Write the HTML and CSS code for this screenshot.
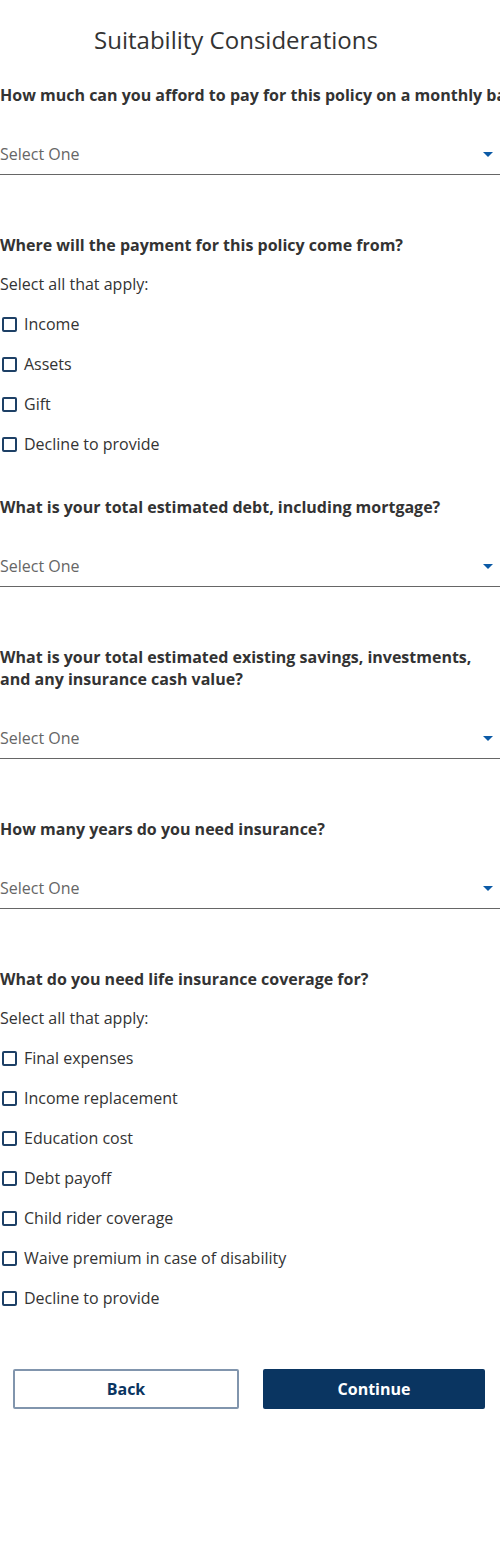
FILE: index.html
```html
<!DOCTYPE html>
<html lang="en">
<head>
<meta charset="utf-8">
<title>Suitability Considerations</title>
<link rel="stylesheet" href="styles.css">
</head>
<body>
<main class="page">
  <h1 class="title">Suitability Considerations</h1>

  <section class="question first">
    <h2 class="q-label nowrap">How much can you afford to pay for this policy on a monthly basis?</h2>
    <div class="select"><span class="placeholder">Select One</span><span class="arrow"></span></div>
  </section>

  <section class="question">
    <h2 class="q-label">Where will the payment for this policy come from?</h2>
    <div class="options">
      <div class="hint">Select all that apply:</div>
      <label class="option"><span class="box"></span>Income</label>
      <label class="option"><span class="box"></span>Assets</label>
      <label class="option"><span class="box"></span>Gift</label>
      <label class="option"><span class="box"></span>Decline to provide</label>
    </div>
  </section>

  <section class="question after-options">
    <h2 class="q-label">What is your total estimated debt, including mortgage?</h2>
    <div class="select"><span class="placeholder">Select One</span><span class="arrow"></span></div>
  </section>

  <section class="question">
    <h2 class="q-label">What is your total estimated existing savings, investments, and any insurance cash value?</h2>
    <div class="select"><span class="placeholder">Select One</span><span class="arrow"></span></div>
  </section>

  <section class="question">
    <h2 class="q-label">How many years do you need insurance?</h2>
    <div class="select"><span class="placeholder">Select One</span><span class="arrow"></span></div>
  </section>

  <section class="question">
    <h2 class="q-label">What do you need life insurance coverage for?</h2>
    <div class="options">
      <div class="hint">Select all that apply:</div>
      <label class="option"><span class="box"></span>Final expenses</label>
      <label class="option"><span class="box"></span>Income replacement</label>
      <label class="option"><span class="box"></span>Education cost</label>
      <label class="option"><span class="box"></span>Debt payoff</label>
      <label class="option"><span class="box"></span>Child rider coverage</label>
      <label class="option"><span class="box"></span>Waive premium in case of disability</label>
      <label class="option"><span class="box"></span>Decline to provide</label>
    </div>
  </section>

  <div class="actions">
    <button class="btn btn-back" type="button">Back</button>
    <button class="btn btn-continue" type="button">Continue</button>
  </div>
</main>
</body>
</html>
```

FILE: styles.css
```css
* { box-sizing: border-box; }
html, body { margin: 0; padding: 0; background: #fff; }
body {
  font-family: "Open Sans", "Noto Sans", sans-serif;
  color: #333;
  overflow-x: hidden;
  width: 500px;
}
.page {
  padding-top: 24px;
  padding-bottom: 144px;
  overflow: hidden;
}
.title {
  margin: 0;
  font-size: 24px;
  font-weight: 400;
  line-height: 32px;
  text-align: center;
  color: #333;
  padding-right: 28px;
}
.question { margin-top: 59px; }
.question.first { margin-top: 28px; }
.question.after-options { margin-top: 32px; }
.q-label {
  margin: 0;
  font-size: 16px;
  font-weight: 700;
  line-height: 22px;
  color: #333;
  padding-right: 20px;
}
.q-label.nowrap { white-space: nowrap; padding-right: 0; }
.select {
  margin-top: 28px;
  height: 41px;
  border-bottom: 1px solid #666;
  display: flex;
  align-items: center;
  justify-content: space-between;
  padding-right: 7px;
}
.placeholder {
  font-size: 16px;
  color: #666;
  line-height: 20px;
}
.arrow {
  width: 0;
  height: 0;
  border-left: 5px solid transparent;
  border-right: 5px solid transparent;
  border-top: 5px solid #0b5aa6;
}
.options { margin-top: 8px; }
.hint, .option {
  height: 40px;
  display: flex;
  align-items: center;
  font-size: 16px;
  color: #333;
}
.option { gap: 7px; }
.box {
  width: 15px;
  height: 15px;
  margin-left: 2px;
  border: 2px solid #1d4066;
  border-radius: 2px;
  flex: none;
}
.actions {
  margin-top: 51px;
  display: flex;
  gap: 24px;
  padding: 0 15px 0 13px;
}
.btn {
  flex: 1 1 0;
  height: 40px;
  font-family: "Open Sans", "Noto Sans", sans-serif;
  font-size: 16px;
  font-weight: 700;
  border-radius: 2px;
  cursor: pointer;
}
.btn-back {
  background: #fff;
  color: #0a3561;
  border: 2px solid #8195ad;
}
.btn-continue {
  background: #0a3561;
  color: #fff;
  border: none;
}
```
